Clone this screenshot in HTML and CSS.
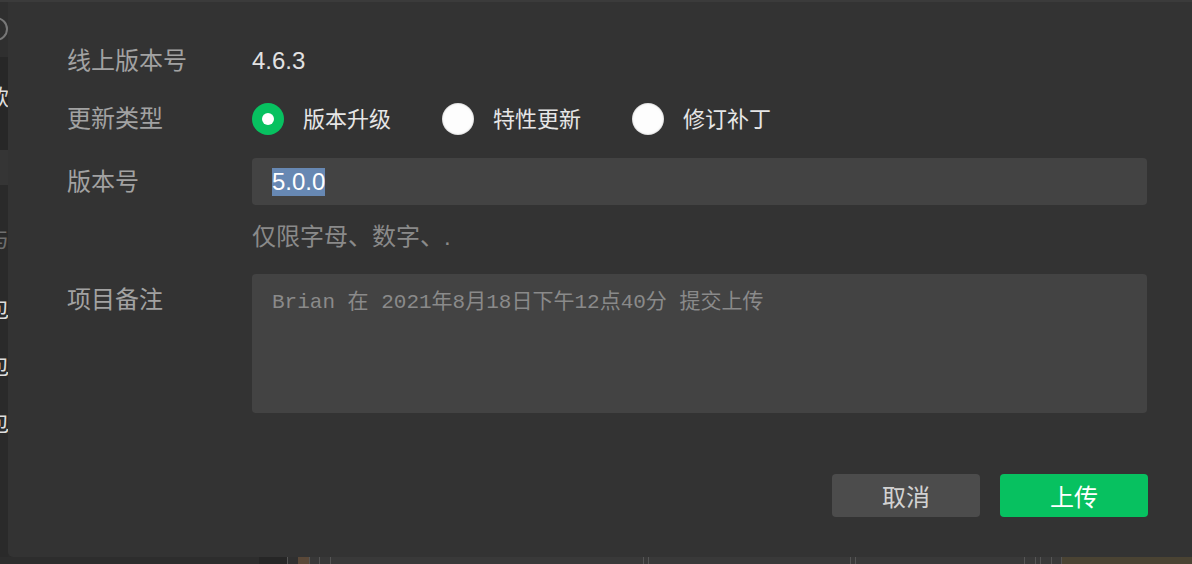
FILE: index.html
```html
<!DOCTYPE html>
<html lang="zh-CN">

<head>
    <meta charset="UTF-8">
    <meta name="viewport" content="width=device-width, initial-scale=1.0">
    <title>上传</title>
    <link rel="stylesheet" href="styles.css">
</head>

<body>

    <div class="window">
        <div class="main">
            <div class="side">
                <div class="side-block side-top"><span class="side-icon"></span></div>
                <div class="side-block side-dark"><span class="side-text">新款</span></div>
                <div class="side-block side-light"></div>
                <div class="side-block side-rest">
                    <span class="side-text side-grey">发布与</span>
                    <span class="side-text">体验包</span>
                    <span class="side-text">开发包</span>
                    <span class="side-text">正式包</span>
                </div>
            </div>

            <div class="dialog">
                <div class="form-row row-version">
                    <div class="label">线上版本号</div>
                    <div class="value">4.6.3</div>
                </div>

                <div class="form-row row-type">
                    <div class="label">更新类型</div>
                    <div class="radio-group">
                        <div class="radio-item">
                            <span class="radio checked"></span>
                            <span class="radio-text">版本升级</span>
                        </div>
                        <div class="radio-item">
                            <span class="radio"></span>
                            <span class="radio-text">特性更新</span>
                        </div>
                        <div class="radio-item">
                            <span class="radio"></span>
                            <span class="radio-text">修订补丁</span>
                        </div>
                    </div>
                </div>

                <div class="form-row row-number">
                    <div class="label">版本号</div>
                    <div class="field"><span class="selected">5.0.0</span></div>
                </div>

                <div class="form-row row-hint">
                    <div class="label"></div>
                    <div class="hint">仅限字母、数字、.</div>
                </div>

                <div class="form-row row-note">
                    <div class="label">项目备注</div>
                    <textarea class="note" placeholder="Brian 在 2021年8月18日下午12点40分 提交上传"></textarea>
                </div>

                <div class="actions">
                    <button type="button" class="btn btn-cancel">取消</button>
                    <button type="button" class="btn btn-primary">上传</button>
                </div>
            </div>
        </div>
        <div class="timeline"></div>
    </div>

</body>

</html>
```

FILE: styles.css
```css
body {
    font-family: "Liberation Sans", "Noto Sans CJK SC", sans-serif;
    background-color: #2b2b2b;
    margin: 0;
    padding: 0;
    overflow: hidden;
}

.window {
    width: 1192px;
    height: 564px;
    display: flex;
    flex-direction: column;
    border-top: 2px solid #3b3b3b;
    box-sizing: border-box;
    overflow: hidden;
}

.main {
    display: flex;
    height: 555px;
    flex-shrink: 0;
}

/* app behind the dialog, only a sliver shows */
.side {
    width: 8px;
    flex-shrink: 0;
    display: flex;
    flex-direction: column;
    overflow: hidden;
}

.side-block {
    display: flex;
    flex-direction: column;
    align-items: flex-end;
}

.side-top {
    height: 55px;
    background-color: #2f2f2f;
    justify-content: center;
}

.side-icon {
    width: 20px;
    height: 20px;
    border: 2px solid #777;
    border-radius: 50%;
    margin-right: 0;
    margin-top: -2px;
    flex-shrink: 0;
}

.side-dark {
    height: 93px;
    background-color: #272727;
    justify-content: center;
    padding-bottom: 13px;
    box-sizing: border-box;
}

.side-light {
    height: 35px;
    background-color: #353535;
}

.side-rest {
    flex: 1;
    background-color: #2a2a2a;
    padding-top: 38px;
}

.side-text {
    font-size: 22px;
    line-height: 57px;
    color: #dedede;
    white-space: nowrap;
    margin-right: -1px;
}

.side-grey {
    color: #6f6f6f;
    line-height: 34px;
    margin-bottom: 24px;
}

.dialog {
    width: 1210px;
    flex-shrink: 0;
    background-color: #333333;
    border-bottom-left-radius: 5px;
    padding: 42px 0 40px 59px;
    box-sizing: border-box;
}

.form-row {
    display: flex;
    align-items: center;
}

.label {
    width: 185px;
    flex-shrink: 0;
    font-size: 24px;
    line-height: 34px;
    color: #a2a2a2;
}

.value {
    font-size: 24px;
    line-height: 34px;
    color: #e2e2e2;
}

.row-type {
    margin-top: 25px;
    height: 32px;
}

.radio-group {
    display: flex;
    gap: 51px;
}

.radio-item {
    display: flex;
    align-items: center;
    gap: 19px;
}

.radio {
    width: 32px;
    height: 32px;
    border-radius: 50%;
    background-color: #fdfdfd;
    box-shadow: inset 0 0 2px rgba(0, 0, 0, 0.35);
    display: flex;
    align-items: center;
    justify-content: center;
}

.radio.checked {
    background-color: #07c160;
    box-shadow: none;
}

.radio.checked::after {
    content: "";
    width: 12px;
    height: 12px;
    border-radius: 50%;
    background-color: #fff;
}

.radio-text {
    font-size: 22px;
    color: #e6e6e6;
    padding-bottom: 4px;
}

.row-number {
    margin-top: 23px;
}

.field {
    width: 895px;
    height: 47px;
    background-color: #434343;
    border-radius: 4px;
    padding-left: 20px;
    box-sizing: border-box;
    display: flex;
    align-items: center;
}

.selected {
    font-size: 24px;
    line-height: 28px;
    color: #fff;
    background-color: #6788b3;
}

.row-hint {
    margin-top: 15px;
}

.hint {
    font-size: 24px;
    line-height: 34px;
    color: #8a8a8a;
}

.row-note {
    margin-top: 20px;
    align-items: flex-start;
}

.row-note .label {
    margin-top: 9px;
}

.note {
    width: 895px;
    height: 139px;
    background-color: #434343;
    border: none;
    border-radius: 4px;
    padding: 14px 20px;
    box-sizing: border-box;
    resize: none;
    outline: none;
    font-family: "Liberation Mono", "Noto Sans CJK SC", monospace;
    font-size: 21px;
    line-height: 30px;
    color: #ddd;
}

.note::placeholder {
    color: #8a8a8a;
}

.actions {
    margin-top: 61px;
    width: 1081px;
    display: flex;
    justify-content: flex-end;
    gap: 20px;
}

.btn {
    width: 148px;
    height: 43px;
    border: none;
    border-radius: 4px;
    font-family: "Liberation Sans", "Noto Sans CJK SC", sans-serif;
    font-size: 24px;
    cursor: pointer;
}

.btn-cancel {
    background-color: #4c4c4c;
    color: #d2d2d2;
}

.btn-primary {
    background-color: #07c160;
    color: #fff;
}

.timeline {
    flex: 1;
    background:
        linear-gradient(to right,
            #2d2d2d 0, #2d2d2d 259px,
            #262626 259px, #262626 287px,
            #555 287px, #555 288px,
            #303030 288px, #303030 298px,
            #5a4838 298px, #5a4838 309px,
            #555 309px, #555 310px,
            #383838 310px, #383838 319px,
            #555 319px, #555 320px,
            #383838 320px, #383838 330px,
            #555 330px, #555 331px,
            #393939 331px, #393939 643px,
            #555 643px, #555 644px,
            #393939 644px, #393939 648px,
            #555 648px, #555 649px,
            #393939 649px, #393939 850px,
            #555 850px, #555 851px,
            #393939 851px, #393939 855px,
            #555 855px, #555 856px,
            #393939 856px, #393939 1024px,
            #555 1024px, #555 1025px,
            #393939 1025px, #393939 1035px,
            #555 1035px, #555 1036px,
            #393939 1036px, #393939 1040px,
            #555 1040px, #555 1041px,
            #393939 1041px, #393939 1051px,
            #555 1051px, #555 1052px,
            #393939 1052px, #393939 1061px,
            #555 1061px, #555 1062px,
            #4a4333 1062px, #4a4333 100%);
}
```
